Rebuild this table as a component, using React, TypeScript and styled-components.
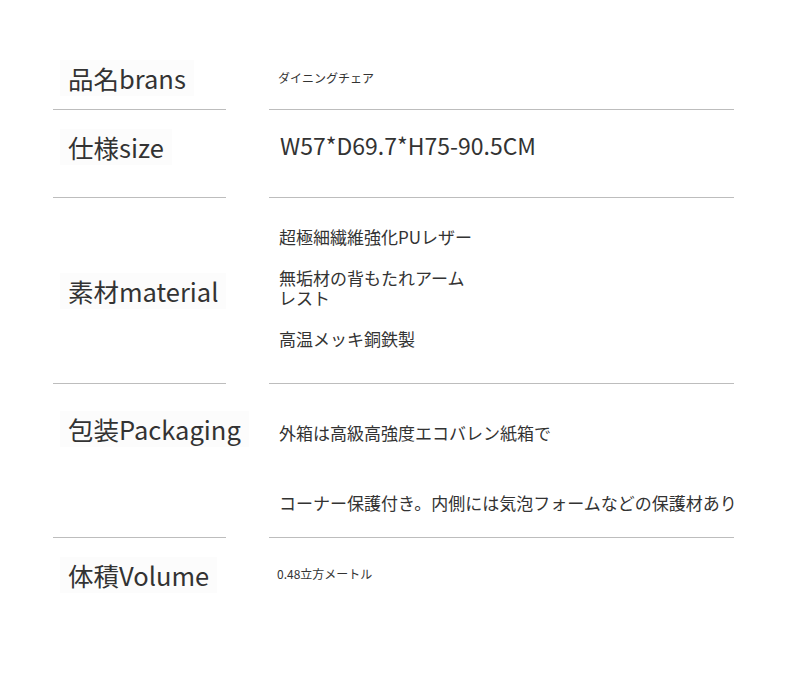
import React from 'react'
import styled, { createGlobalStyle } from 'styled-components'

const GlobalStyle = createGlobalStyle`
  html, body {
    margin: 0;
    padding: 0;
    background: #ffffff;
  }
  body {
    font-family: 'Noto Sans CJK JP', 'Noto Sans', sans-serif;
    color: #333333;
  }
`

const Page = styled.div`
  width: 790px;
  min-height: 693px;
  padding: 55px 0 0 53px;
  box-sizing: border-box;
`

const Row = styled.div<{ $height: number; $last?: boolean }>`
  display: grid;
  grid-template-columns: 173px 465px;
  column-gap: 43px;
  height: ${(p) => p.$height}px;

  > div {
    box-sizing: border-box;
    border-bottom: ${(p) => (p.$last ? 'none' : '1px solid #bdbdbd')};
  }
`

const LabelCell = styled.div<{ $top: number }>`
  padding: ${(p) => p.$top}px 0 0 15px;
`

const Label = styled.span`
  display: inline-block;
  font-size: 25.5px;
  line-height: 36px;
  white-space: nowrap;
  background: #fcfcfc;
  margin-left: -8px;
  padding: 0 8px;
`

const ValueCell = styled.div<{ $top: number; $left?: number }>`
  padding: ${(p) => p.$top}px 0 0 ${(p) => p.$left ?? 10}px;
`

const Small = styled.div`
  font-size: 12px;
  line-height: 17px;
  white-space: nowrap;
`

const Size = styled.div`
  font-size: 23px;
  line-height: 30px;
  white-space: nowrap;
`

const Para = styled.p<{ $gap: number; $width?: number }>`
  margin: 0 0 ${(p) => p.$gap}px;
  font-size: 17px;
  line-height: 20px;
  width: ${(p) => (p.$width ? `${p.$width}px` : 'auto')};
  white-space: ${(p) => (p.$width ? 'normal' : 'nowrap')};
`

const App = (): JSX.Element => {
  return (
    <>
      <GlobalStyle />
      <Page>
        <Row $height={55}>
          <LabelCell $top={5}>
            <Label>品名brans</Label>
          </LabelCell>
          <ValueCell $top={14} $left={9}>
            <Small>ダイニングチェア</Small>
          </ValueCell>
        </Row>
        <Row $height={88}>
          <LabelCell $top={19}>
            <Label>仕様size</Label>
          </LabelCell>
          <ValueCell $top={20} $left={11}>
            <Size>W57*D69.7*H75-90.5CM</Size>
          </ValueCell>
        </Row>
        <Row $height={186}>
          <LabelCell $top={75}>
            <Label>素材material</Label>
          </LabelCell>
          <ValueCell $top={29}>
            <Para $gap={21}>超極細繊維強化PUレザー</Para>
            <Para $gap={21} $width={200}>
              無垢材の背もたれアームレスト
            </Para>
            <Para $gap={0}>高温メッキ銅鉄製</Para>
          </ValueCell>
        </Row>
        <Row $height={154}>
          <LabelCell $top={27}>
            <Label>包装Packaging</Label>
          </LabelCell>
          <ValueCell $top={39}>
            <Para $gap={50}>外箱は高級高強度エコバレン紙箱で</Para>
            <Para $gap={0}>コーナー保護付き。内側には気泡フォームなどの保護材あり</Para>
          </ValueCell>
        </Row>
        <Row $height={80} $last>
          <LabelCell $top={19}>
            <Label>体積Volume</Label>
          </LabelCell>
          <ValueCell $top={27} $left={8}>
            <Small>0.48立方メートル</Small>
          </ValueCell>
        </Row>
      </Page>
    </>
  )
}

export default App
